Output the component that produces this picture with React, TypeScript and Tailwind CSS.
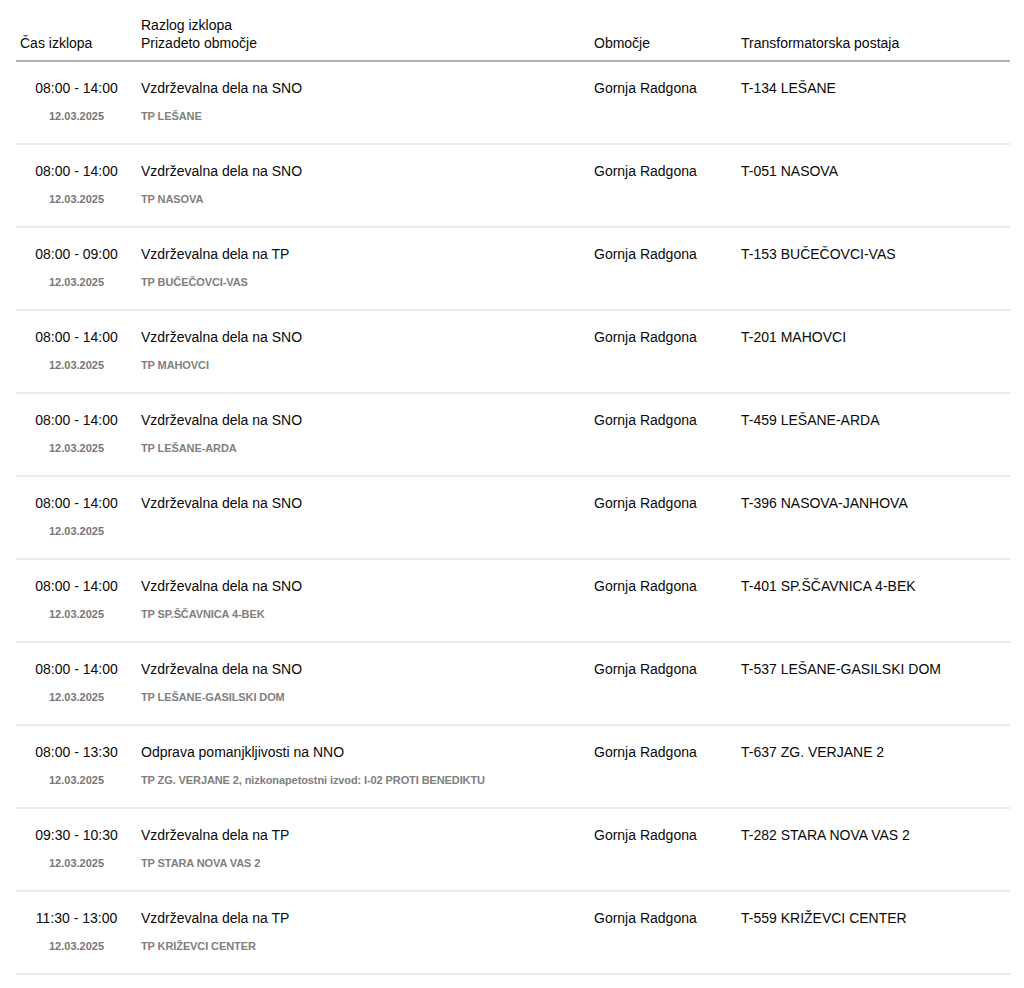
import { ReactElement } from "react";

type Outage = {
  time: string;
  date: string;
  reason: string;
  area: string;
  region: string;
  station: string;
};

const outages: Outage[] = [
  { time: "08:00 - 14:00", date: "12.03.2025", reason: "Vzdrževalna dela na SNO", area: "TP LEŠANE", region: "Gornja Radgona", station: "T-134 LEŠANE" },
  { time: "08:00 - 14:00", date: "12.03.2025", reason: "Vzdrževalna dela na SNO", area: "TP NASOVA", region: "Gornja Radgona", station: "T-051 NASOVA" },
  { time: "08:00 - 09:00", date: "12.03.2025", reason: "Vzdrževalna dela na TP", area: "TP BUČEČOVCI-VAS", region: "Gornja Radgona", station: "T-153 BUČEČOVCI-VAS" },
  { time: "08:00 - 14:00", date: "12.03.2025", reason: "Vzdrževalna dela na SNO", area: "TP MAHOVCI", region: "Gornja Radgona", station: "T-201 MAHOVCI" },
  { time: "08:00 - 14:00", date: "12.03.2025", reason: "Vzdrževalna dela na SNO", area: "TP LEŠANE-ARDA", region: "Gornja Radgona", station: "T-459 LEŠANE-ARDA" },
  { time: "08:00 - 14:00", date: "12.03.2025", reason: "Vzdrževalna dela na SNO", area: "", region: "Gornja Radgona", station: "T-396 NASOVA-JANHOVA" },
  { time: "08:00 - 14:00", date: "12.03.2025", reason: "Vzdrževalna dela na SNO", area: "TP SP.ŠČAVNICA 4-BEK", region: "Gornja Radgona", station: "T-401 SP.ŠČAVNICA 4-BEK" },
  { time: "08:00 - 14:00", date: "12.03.2025", reason: "Vzdrževalna dela na SNO", area: "TP LEŠANE-GASILSKI DOM", region: "Gornja Radgona", station: "T-537 LEŠANE-GASILSKI DOM" },
  { time: "08:00 - 13:30", date: "12.03.2025", reason: "Odprava pomanjkljivosti na NNO", area: "TP ZG. VERJANE 2, nizkonapetostni izvod: I-02 PROTI BENEDIKTU", region: "Gornja Radgona", station: "T-637 ZG. VERJANE 2" },
  { time: "09:30 - 10:30", date: "12.03.2025", reason: "Vzdrževalna dela na TP", area: "TP STARA NOVA VAS 2", region: "Gornja Radgona", station: "T-282 STARA NOVA VAS 2" },
  { time: "11:30 - 13:00", date: "12.03.2025", reason: "Vzdrževalna dela na TP", area: "TP KRIŽEVCI CENTER", region: "Gornja Radgona", station: "T-559 KRIŽEVCI CENTER" },
];

const cols = "grid grid-cols-[121px_453px_147px_1fr]";

const OutageRow = ({ item }: { item: Outage }): ReactElement => {
  return (
    <div className={`${cols} border-b-2 border-[#ebebeb] pt-[17px] pb-[20px]`}>
      <div className="flex flex-col items-center">
        <p className="text-[14px] leading-[18px]">{item.time}</p>
        <p className="mt-3 text-[11px] font-bold leading-[14px] text-[#777]">{item.date}</p>
      </div>
      <div className="flex flex-col pl-1">
        <p className="text-[14px] leading-[18px]">{item.reason}</p>
        <p className="mt-3 h-[14px] text-[11px] font-bold leading-[14px] tracking-[-0.1px] text-[#808080]">{item.area}</p>
      </div>
      <p className="pl-1 text-[14px] leading-[18px]">{item.region}</p>
      <p className="pl-1 text-[14px] leading-[18px]">{item.station}</p>
    </div>
  );
};

export default function App(): ReactElement {
  return (
    <div className="min-h-[988px] bg-white px-4 text-[#0a0a0a] font-['Liberation_Sans',Arial,sans-serif]">
      <div className="w-[994px]">
        <div className={`${cols} items-end border-b-2 border-[#b0b0b0] pt-4 pb-2 text-[14px] leading-[18px]`}>
          <p className="pl-1">Čas izklopa</p>
          <div className="pl-1">
            <p>Razlog izklopa</p>
            <p>Prizadeto območje</p>
          </div>
          <p className="pl-1">Območje</p>
          <p className="pl-1">Transformatorska postaja</p>
        </div>
        {outages.map((item, i) => (
          <OutageRow key={i} item={item} />
        ))}
      </div>
    </div>
  );
}
